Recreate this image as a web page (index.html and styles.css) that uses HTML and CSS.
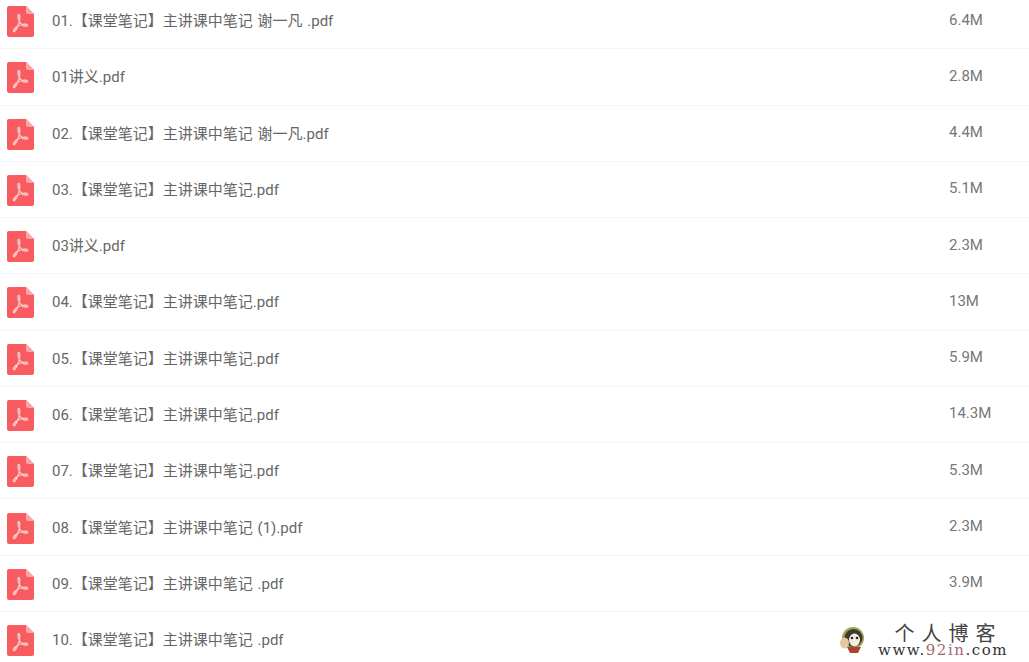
FILE: index.html
```html
<!DOCTYPE html>
<html lang="zh-CN">
<head>
    <meta charset="UTF-8">
    <title>文件列表</title>
    <link rel="stylesheet" href="styles.css">
</head>
<body>
    <svg class="defs" width="0" height="0">
        <symbol id="pdf" viewBox="0 0 27 31">
            <path d="M2 0H19L27 8V29a2 2 0 0 1-2 2H2a2 2 0 0 1-2-2V2a2 2 0 0 1 2-2Z" fill="#f95c60"/>
            <path d="M19 0L27 8H21a2 2 0 0 1-2-2Z" fill="#fca5a6"/>
            <path transform="translate(.4 1) scale(.875 1)" d="M13 7.5C11.8 7.5 11.9 10.5 13.2 13.5C14.6 16.8 17.5 19 21.5 19.2C23.6 19.2 23.6 17.3 21.3 17.2C16.5 17 10.5 18.8 7.5 22.5C6 24.4 7.6 25.4 9 23.8C11.2 21.2 13.5 16 14 11.5C14.3 9 14 7.5 13 7.5Z" fill="none" stroke="#fbc9c9" stroke-width="1.6"/>
        </symbol>
    </svg>
    <ul class="file-list">
        <li class="file-row"><svg class="file-icon"><use href="#pdf"/></svg><span class="file-name">01.【课堂笔记】主讲课中笔记 谢一凡 .pdf</span><span class="file-size">6.4M</span></li>
        <li class="file-row"><svg class="file-icon"><use href="#pdf"/></svg><span class="file-name">01讲义.pdf</span><span class="file-size">2.8M</span></li>
        <li class="file-row"><svg class="file-icon"><use href="#pdf"/></svg><span class="file-name">02.【课堂笔记】主讲课中笔记 谢一凡.pdf</span><span class="file-size">4.4M</span></li>
        <li class="file-row"><svg class="file-icon"><use href="#pdf"/></svg><span class="file-name">03.【课堂笔记】主讲课中笔记.pdf</span><span class="file-size">5.1M</span></li>
        <li class="file-row"><svg class="file-icon"><use href="#pdf"/></svg><span class="file-name">03讲义.pdf</span><span class="file-size">2.3M</span></li>
        <li class="file-row"><svg class="file-icon"><use href="#pdf"/></svg><span class="file-name">04.【课堂笔记】主讲课中笔记.pdf</span><span class="file-size">13M</span></li>
        <li class="file-row"><svg class="file-icon"><use href="#pdf"/></svg><span class="file-name">05.【课堂笔记】主讲课中笔记.pdf</span><span class="file-size">5.9M</span></li>
        <li class="file-row"><svg class="file-icon"><use href="#pdf"/></svg><span class="file-name">06.【课堂笔记】主讲课中笔记.pdf</span><span class="file-size">14.3M</span></li>
        <li class="file-row"><svg class="file-icon"><use href="#pdf"/></svg><span class="file-name">07.【课堂笔记】主讲课中笔记.pdf</span><span class="file-size">5.3M</span></li>
        <li class="file-row"><svg class="file-icon"><use href="#pdf"/></svg><span class="file-name">08.【课堂笔记】主讲课中笔记 (1).pdf</span><span class="file-size">2.3M</span></li>
        <li class="file-row"><svg class="file-icon"><use href="#pdf"/></svg><span class="file-name">09.【课堂笔记】主讲课中笔记 .pdf</span><span class="file-size">3.9M</span></li>
        <li class="file-row"><svg class="file-icon"><use href="#pdf"/></svg><span class="file-name">10.【课堂笔记】主讲课中笔记 .pdf</span><span class="file-size"></span></li>
    </ul>
    <div class="watermark">
        <svg class="mascot" viewBox="0 0 25 26">
            <circle cx="13" cy="11" r="11" fill="#9aa65a"/>
            <circle cx="13.5" cy="11" r="9" fill="#3f3a2a"/>
            <ellipse cx="14.5" cy="13" rx="5.5" ry="6.5" fill="#f3ece2"/>
            <circle cx="12" cy="11" r="1.3" fill="#2a2a2a"/>
            <circle cx="17" cy="11" r="1.3" fill="#2a2a2a"/>
            <ellipse cx="4.5" cy="16" rx="4.5" ry="5.5" fill="#e6c9a0"/>
            <path d="M7 20h14l-3 6H10Z" fill="#b0402f"/>
        </svg>
        <div class="wm-text">
            <div class="wm-title">个人博客</div>
            <div class="wm-url">www.<span class="wm-accent">92in</span>.com</div>
        </div>
    </div>
</body>
</html>
```

FILE: styles.css
```css
html, body {
    margin: 0;
    height: 662px;
    overflow: hidden;
    background: #fff;
}
body {
    position: relative;
    font-family: Roboto, "Noto Sans CJK SC", sans-serif;
    color: #666;
}
.defs {
    display: block;
}
.file-list {
    list-style: none;
    margin: -7px 0 0;
    padding: 0;
}
.file-row {
    display: flex;
    align-items: center;
    height: 56.27px;
    box-sizing: border-box;
    border-bottom: 1px solid #f6f6f6;
    padding: 0 0 2px 7px;
    font-size: 15px;
}
.file-icon {
    width: 27px;
    height: 31px;
    flex: none;
    margin-top: 4px;
}
.file-name {
    margin-left: 18px;
    flex: 1;
    white-space: pre;
    word-spacing: 1px;
}
.file-size {
    width: 80px;
    color: #777;
}
.watermark {
    position: absolute;
    right: 0;
    top: 622px;
    width: 197px;
    height: 36px;
    display: flex;
    align-items: center;
    gap: 13px;
    background: #fff;
    padding-left: 8px;
    box-sizing: border-box;
}
.mascot {
    width: 25px;
    height: 26px;
    flex: none;
}
.wm-text {
    width: 130px;
    text-align: center;
}
.wm-title {
    font-family: "Noto Sans CJK SC", sans-serif;
    font-size: 20px;
    line-height: 20px;
    letter-spacing: 7px;
    text-indent: 11px;
    color: #444;
    white-space: nowrap;
}
.wm-url {
    font-family: "DejaVu Serif", serif;
    font-size: 15px;
    line-height: 15px;
    letter-spacing: 1.55px;
    color: #333;
    white-space: nowrap;
}
.wm-accent {
    color: #a5686c;
}
```
